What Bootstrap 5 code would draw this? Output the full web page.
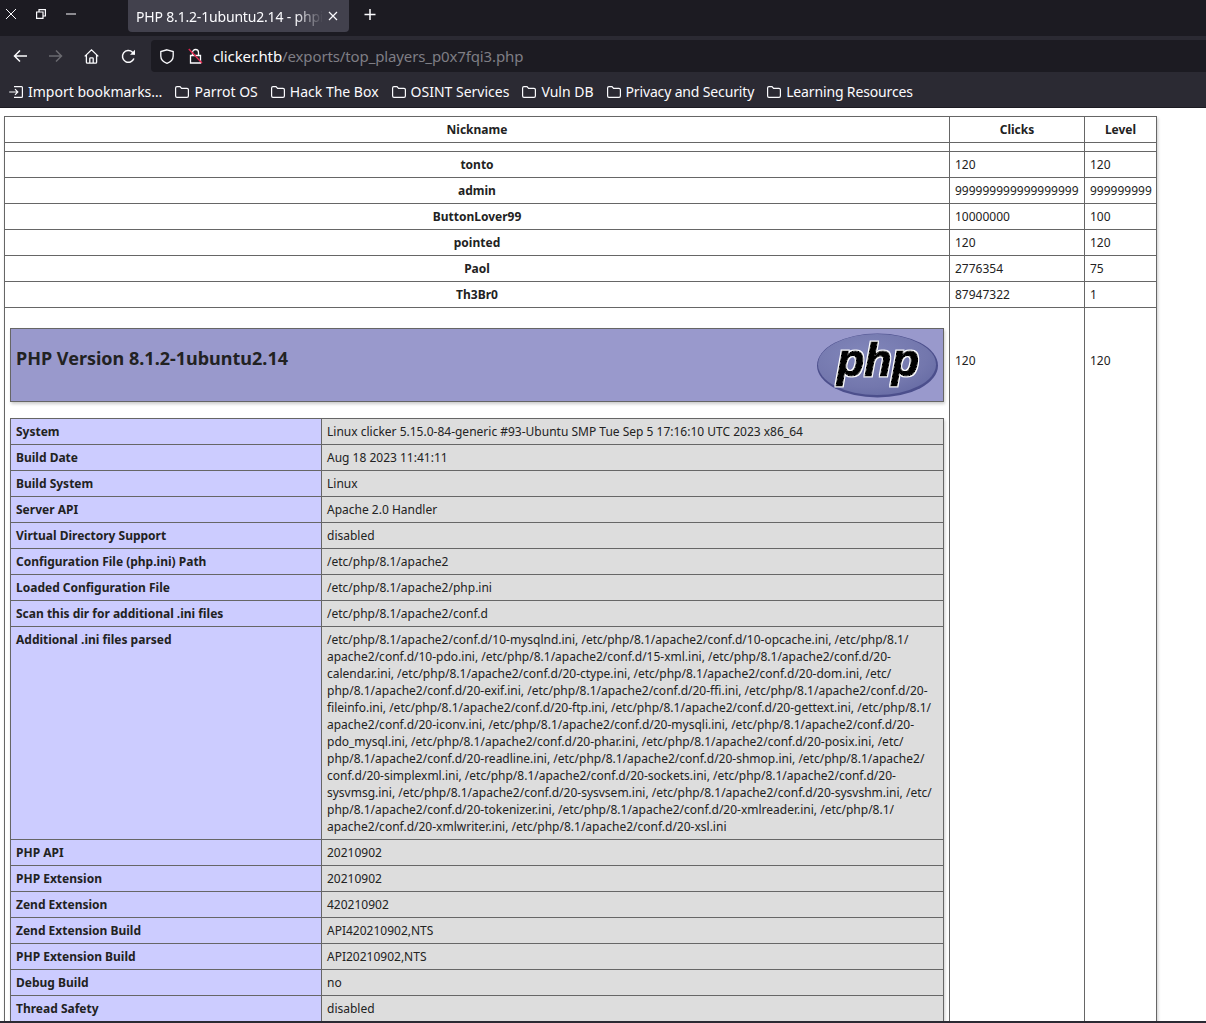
<!DOCTYPE html>
<html lang="en">
  <head>
    <meta charset="UTF-8" />
    <meta name="viewport" content="width=device-width, initial-scale=1.0" />
    <title>PHP 8.1.2-1ubuntu2.14 - phpinfo()</title>
    <link href="https://cdn.jsdelivr.net/npm/bootstrap@5.3.0/dist/css/bootstrap.min.css" rel="stylesheet" />
    <style>
      body { height: 100vh; overflow: hidden; background: #2b2a33; font-family: "Noto Sans", sans-serif; }
      svg { display: block; flex: none; }

      /* browser chrome */
      .tab-strip { height: 36px; background: #1c1b22; color: #fbfbfe; }
      .win-btns { width: 128px; gap: 20px; padding-left: 6px; height: 28px; }
      .tab-item { width: 221px; height: 32px; background: #42414d; border-radius: 0 0 4px 4px; padding: 0 11px 0 8px; font-size: 14px; letter-spacing: -.18px; }
      .tab-text { white-space: nowrap; -webkit-mask-image: linear-gradient(to right, #000 85%, transparent); mask-image: linear-gradient(to right, #000 85%, transparent); }
      .tab-plus { margin-left: 15px; }
      .tool-row { height: 36px; padding-top: 4px; color: #fbfbfe; }
      .tool-btns { width: 151px; padding-left: 13px; gap: 22px; }
      .home-btn { margin-left: -1px; }
      .url-box { height: 32px; background: #1c1b22; border-radius: 4px 0 0 4px; padding-left: 9px; font-size: 15px; letter-spacing: -.12px; }
      .url-lock { margin-left: 14px; margin-right: 10px; }
      .url-rest { color: #7f7e85; }
      .mark-row { height: 35px; padding-top: 4px; padding-left: 9px; gap: 13px; color: #fbfbfe; font-size: 14px; white-space: nowrap; }
      .mark-item { gap: 5px; }
      .mark-tight { letter-spacing: -.15px; }
      .chrome-edge { height: 1px; background: #1c1b22; }

      /* page */
      .page-view { background: #fff; min-height: 0; overflow: hidden; color: #222; font-size: 12px; line-height: 17px; padding: 8px 0 0 4px; }
      .info-tbl { --bs-table-border-color: #666; --bs-table-color: #222; color: #222; border-collapse: collapse; table-layout: fixed; box-shadow: 1px 2px 3px #ccc; vertical-align: baseline; margin-bottom: 0; }
      .info-tbl > * > tr > * { padding: 4px 5px; vertical-align: baseline; line-height: 17px; border: 1px solid #666; }
      .outer-tbl { width: 1153px; }
      .inner-tbl { width: 934px; }
      .w-nick { width: 945px; }
      .w-clicks { width: 135px; }
      .w-level { width: 72px; }
      .w-key { width: 311px; }
      .info-tbl td.key-cell { background: #ccf; font-weight: 700; }
      .info-tbl td.val-cell { background: #ddd; overflow-wrap: break-word; }
      .info-tbl td.head-cell { background: #99c; height: 72px; }
      .php-title { font-size: 18px; font-weight: 700; line-height: 24px; margin: 13px 0 0; color: #222; }
      .php-logo { float: right; margin-bottom: -1px; }
      .num-cell { white-space: nowrap; }

      .bottom-edge { height: 2px; background: #2b2a33; }
    </style>
  </head>
  <body class="d-flex flex-column">
    <div class="tab-strip d-flex align-items-start flex-shrink-0">
      <div class="win-btns d-flex align-items-center">
        <svg width="10" height="10" viewBox="0 0 10 10" fill="none" stroke="#fbfbfe" stroke-width="1"><path d="M0 0 10 10M10 0 0 10" /></svg>
        <svg width="10" height="10" viewBox="0 0 10 10" fill="none" stroke="#fbfbfe" stroke-width="1.2"><path d="M.6 3h6.4v6.4H.6zM3 3V.6h6.400V7H7" /></svg>
        <svg width="10" height="2" viewBox="0 0 10 2" fill="none" stroke="#fbfbfe" stroke-width="1"><path d="M0 1h10" /></svg>
      </div>
      <div class="tab-item d-flex align-items-center justify-content-between">
        <span class="tab-text">PHP 8.1.2-1ubuntu2.14 - phpi</span>
        <svg width="10" height="10" viewBox="0 0 10 10" fill="none" stroke="#fbfbfe" stroke-width="1.2"><path d="M1 1 9 9M9 1 1 9" /></svg>
      </div>
      <svg class="tab-plus" width="12" height="28" viewBox="0 0 12 28" fill="none" stroke="#fbfbfe" stroke-width="1.5"><path d="M6 9v11M.5 14.500h11" /></svg>
    </div>

    <div class="tool-row d-flex flex-shrink-0">
      <div class="tool-btns d-flex align-items-center">
        <svg width="14" height="14" viewBox="0 0 14 14" fill="none" stroke="#fbfbfe" stroke-width="1.5"><path d="M14 7H1.500M7 1.500 1.500 7 7 12.500" /></svg>
        <svg width="14" height="14" viewBox="0 0 14 14" fill="none" stroke="#6a6a70" stroke-width="1.5"><path d="M0 7h12.500M7 1.500 12.500 7 7 12.500" /></svg>
        <svg class="home-btn" width="15" height="15" viewBox="0 0 15 15" fill="none" stroke="#fbfbfe" stroke-width="1.3"><path d="M.7 7.400 7.500.9l6.800 6.500M2.400 6v7.200c0 .6.400 1 1 1h8.200c.6 0 1-.4 1-1V6M5.800 14.200V9.600c0-.4.3-.7.7-.7h2c.4 0 .7.3.7.7v4.600" /></svg>
        <svg width="15" height="15" viewBox="0 0 15 15" fill="none" stroke="#fbfbfe" stroke-width="1.5"><path d="M12.900 9.500A5.900 5.900 0 1 1 11.500 3.200L13.600 5.300" /><path d="M14 .8v5h-5z" fill="#fbfbfe" stroke="none" /></svg>
      </div>
      <div class="url-box flex-grow-1 d-flex align-items-center">
        <svg width="14" height="15" viewBox="0 0 14 15" fill="none" stroke="#fbfbfe" stroke-width="1.3"><path d="M7 .8 13.200 2.600V7c0 3.400-2.600 6-6.200 7.300C3.400 13 .8 10.400.8 7V2.600z" /></svg>
        <svg class="url-lock" width="15" height="16" viewBox="0 0 15 16" fill="none" stroke="#fbfbfe" stroke-width="1.3"><path d="M4.500 7V4.500a3 3 0 0 1 6 0V7M2.500 7.500h10v7.500h-10z" /><path d="M.8 1 14 15" stroke="#e22850" stroke-width="1.4" /></svg>
        <span>clicker.htb<span class="url-rest">/exports/top_players_p0x7fqi3.php</span></span>
      </div>
    </div>

    <div class="mark-row d-flex align-items-center flex-shrink-0">
      <div class="mark-item d-flex align-items-center">
        <svg width="14" height="12" viewBox="0 0 14 12" fill="none" stroke="#fbfbfe" stroke-width="1.2"><path d="M5 .6h7.500c.5 0 .9.400.9.900v9c0 .5-.4.900-.9.900H5M.2 6h8.500M6 3.200 8.800 6 6 8.800" /></svg>
        <span>Import bookmarks…</span>
      </div>
      <div class="mark-item d-flex align-items-center">
        <svg width="14" height="12" viewBox="0 0 14 12" fill="none" stroke="#fbfbfe" stroke-width="1.2"><path d="M.6 2c0-.8.6-1.400 1.400-1.400h3l1.600 1.800h5.400c.8 0 1.400.6 1.400 1.400V10c0 .8-.6 1.400-1.400 1.400H2c-.8 0-1.400-.6-1.400-1.400z" /></svg>
        <span>Parrot OS</span>
      </div>
      <div class="mark-item d-flex align-items-center">
        <svg width="14" height="12" viewBox="0 0 14 12" fill="none" stroke="#fbfbfe" stroke-width="1.2"><path d="M.6 2c0-.8.6-1.400 1.400-1.400h3l1.600 1.800h5.400c.8 0 1.400.6 1.400 1.400V10c0 .8-.6 1.400-1.400 1.400H2c-.8 0-1.400-.6-1.400-1.400z" /></svg>
        <span>Hack The Box</span>
      </div>
      <div class="mark-item d-flex align-items-center">
        <svg width="14" height="12" viewBox="0 0 14 12" fill="none" stroke="#fbfbfe" stroke-width="1.2"><path d="M.6 2c0-.8.6-1.400 1.400-1.400h3l1.600 1.800h5.400c.8 0 1.400.6 1.400 1.400V10c0 .8-.6 1.400-1.400 1.400H2c-.8 0-1.400-.6-1.400-1.400z" /></svg>
        <span>OSINT Services</span>
      </div>
      <div class="mark-item d-flex align-items-center">
        <svg width="14" height="12" viewBox="0 0 14 12" fill="none" stroke="#fbfbfe" stroke-width="1.2"><path d="M.6 2c0-.8.6-1.400 1.400-1.400h3l1.600 1.800h5.400c.8 0 1.400.6 1.400 1.400V10c0 .8-.6 1.400-1.400 1.400H2c-.8 0-1.400-.6-1.400-1.400z" /></svg>
        <span>Vuln DB</span>
      </div>
      <div class="mark-item d-flex align-items-center">
        <svg width="14" height="12" viewBox="0 0 14 12" fill="none" stroke="#fbfbfe" stroke-width="1.2"><path d="M.6 2c0-.8.6-1.400 1.400-1.400h3l1.600 1.800h5.400c.8 0 1.400.6 1.400 1.400V10c0 .8-.6 1.400-1.400 1.400H2c-.8 0-1.400-.6-1.400-1.400z" /></svg>
        <span class="mark-tight">Privacy and Security</span>
      </div>
      <div class="mark-item d-flex align-items-center">
        <svg width="14" height="12" viewBox="0 0 14 12" fill="none" stroke="#fbfbfe" stroke-width="1.2"><path d="M.6 2c0-.8.6-1.400 1.400-1.400h3l1.600 1.800h5.400c.8 0 1.400.6 1.400 1.400V10c0 .8-.6 1.400-1.400 1.400H2c-.8 0-1.400-.6-1.400-1.400z" /></svg>
        <span class="mark-tight">Learning Resources</span>
      </div>
    </div>
    <div class="chrome-edge flex-shrink-0"></div>

    <div class="page-view flex-grow-1">
      <table class="table table-bordered info-tbl outer-tbl">
        <colgroup><col class="w-nick" /><col class="w-clicks" /><col class="w-level" /></colgroup>
        <thead>
          <tr><th class="text-center">Nickname</th><th class="text-center">Clicks</th><th class="text-center">Level</th></tr>
        </thead>
        <tbody>
          <tr><td></td><td></td><td></td></tr>
          <tr><td class="fw-bold text-center">tonto</td><td>120</td><td>120</td></tr>
          <tr><td class="fw-bold text-center">admin</td><td class="num-cell">999999999999999999</td><td>999999999</td></tr>
          <tr><td class="fw-bold text-center">ButtonLover99</td><td>10000000</td><td>100</td></tr>
          <tr><td class="fw-bold text-center">pointed</td><td>120</td><td>120</td></tr>
          <tr><td class="fw-bold text-center">Paol</td><td>2776354</td><td>75</td></tr>
          <tr><td class="fw-bold text-center">Th3Br0</td><td>87947322</td><td>1</td></tr>
          <tr>
            <td>
              <table class="table table-bordered info-tbl inner-tbl mt-3 mb-3">
                <tbody>
                  <tr>
                    <td class="head-cell">
                      <svg class="php-logo" width="121" height="65" viewBox="0 0 121 65">
                        <defs>
                          <radialGradient id="logoFill" cx="0.4" cy="0.35" r="0.75">
                            <stop offset="0" stop-color="#8287bb" />
                            <stop offset="0.7" stop-color="#7377ad" />
                            <stop offset="1" stop-color="#656aa3" />
                          </radialGradient>
                          <filter id="logoEdge" x="-10%" y="-10%" width="120%" height="120%">
                            <feMorphology in="SourceAlpha" operator="dilate" radius="1" result="wide" />
                            <feFlood flood-color="#fff" />
                            <feComposite in2="wide" operator="in" />
                            <feMerge><feMergeNode /><feMergeNode in="SourceGraphic" /></feMerge>
                          </filter>
                        </defs>
                        <ellipse cx="60.5" cy="32.5" rx="60.5" ry="32" fill="#4c4f8c" />
                        <ellipse cx="60" cy="31.5" rx="59" ry="30.5" fill="url(#logoFill)" />
                        <text x="20" y="43" font-family="Liberation Sans, sans-serif" font-size="46" font-weight="700" font-style="italic" textLength="82" lengthAdjust="spacingAndGlyphs" fill="#000" stroke="#000" stroke-width="1.2" filter="url(#logoEdge)">php</text>
                      </svg>
                      <h1 class="php-title">PHP Version 8.1.2-1ubuntu2.14</h1>
                    </td>
                  </tr>
                </tbody>
              </table>
              <table class="table table-bordered info-tbl inner-tbl">
                <colgroup><col class="w-key" /><col /></colgroup>
                <tbody>
                  <tr><td class="key-cell">System</td><td class="val-cell">Linux clicker 5.15.0-84-generic #93-Ubuntu SMP Tue Sep 5 17:16:10 UTC 2023 x86_64</td></tr>
                  <tr><td class="key-cell">Build Date</td><td class="val-cell">Aug 18 2023 11:41:11</td></tr>
                  <tr><td class="key-cell">Build System</td><td class="val-cell">Linux</td></tr>
                  <tr><td class="key-cell">Server API</td><td class="val-cell">Apache 2.0 Handler</td></tr>
                  <tr><td class="key-cell">Virtual Directory Support</td><td class="val-cell">disabled</td></tr>
                  <tr><td class="key-cell">Configuration File (php.ini) Path</td><td class="val-cell">/etc/php/8.1/apache2</td></tr>
                  <tr><td class="key-cell">Loaded Configuration File</td><td class="val-cell">/etc/php/8.1/apache2/php.ini</td></tr>
                  <tr><td class="key-cell">Scan this dir for additional .ini files</td><td class="val-cell">/etc/php/8.1/apache2/conf.d</td></tr>
                  <tr>
                    <td class="key-cell">Additional .ini files parsed</td>
                    <td class="val-cell">
                      /etc/php/8.1/apache2/conf.d/10-mysqlnd.ini, /etc/php/8.1/apache2/conf.d/10-opcache.ini, /etc/php/8.1/<br />
                      apache2/conf.d/10-pdo.ini, /etc/php/8.1/apache2/conf.d/15-xml.ini, /etc/php/8.1/apache2/conf.d/20-<br />
                      calendar.ini, /etc/php/8.1/apache2/conf.d/20-ctype.ini, /etc/php/8.1/apache2/conf.d/20-dom.ini, /etc/<br />
                      php/8.1/apache2/conf.d/20-exif.ini, /etc/php/8.1/apache2/conf.d/20-ffi.ini, /etc/php/8.1/apache2/conf.d/20-<br />
                      fileinfo.ini, /etc/php/8.1/apache2/conf.d/20-ftp.ini, /etc/php/8.1/apache2/conf.d/20-gettext.ini, /etc/php/8.1/<br />
                      apache2/conf.d/20-iconv.ini, /etc/php/8.1/apache2/conf.d/20-mysqli.ini, /etc/php/8.1/apache2/conf.d/20-<br />
                      pdo_mysql.ini, /etc/php/8.1/apache2/conf.d/20-phar.ini, /etc/php/8.1/apache2/conf.d/20-posix.ini, /etc/<br />
                      php/8.1/apache2/conf.d/20-readline.ini, /etc/php/8.1/apache2/conf.d/20-shmop.ini, /etc/php/8.1/apache2/<br />
                      conf.d/20-simplexml.ini, /etc/php/8.1/apache2/conf.d/20-sockets.ini, /etc/php/8.1/apache2/conf.d/20-<br />
                      sysvmsg.ini, /etc/php/8.1/apache2/conf.d/20-sysvsem.ini, /etc/php/8.1/apache2/conf.d/20-sysvshm.ini, /etc/<br />
                      php/8.1/apache2/conf.d/20-tokenizer.ini, /etc/php/8.1/apache2/conf.d/20-xmlreader.ini, /etc/php/8.1/<br />
                      apache2/conf.d/20-xmlwriter.ini, /etc/php/8.1/apache2/conf.d/20-xsl.ini
                    </td>
                  </tr>
                  <tr><td class="key-cell">PHP API</td><td class="val-cell">20210902</td></tr>
                  <tr><td class="key-cell">PHP Extension</td><td class="val-cell">20210902</td></tr>
                  <tr><td class="key-cell">Zend Extension</td><td class="val-cell">420210902</td></tr>
                  <tr><td class="key-cell">Zend Extension Build</td><td class="val-cell">API420210902,NTS</td></tr>
                  <tr><td class="key-cell">PHP Extension Build</td><td class="val-cell">API20210902,NTS</td></tr>
                  <tr><td class="key-cell">Debug Build</td><td class="val-cell">no</td></tr>
                  <tr><td class="key-cell">Thread Safety</td><td class="val-cell">disabled</td></tr>
                </tbody>
              </table>
            </td>
            <td>120</td>
            <td>120</td>
          </tr>
        </tbody>
      </table>
    </div>
    <div class="bottom-edge flex-shrink-0"></div>

    <script src="https://cdn.jsdelivr.net/npm/bootstrap@5.3.0/dist/js/bootstrap.bundle.min.js"></script>
  </body>
</html>
